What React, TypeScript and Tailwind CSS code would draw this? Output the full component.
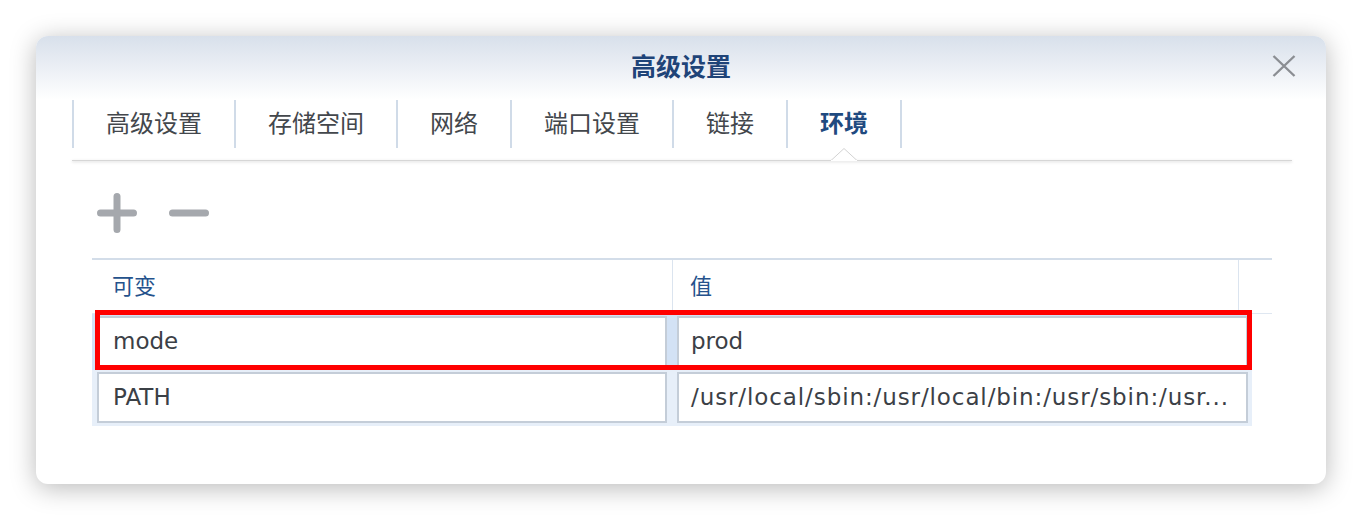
import React from "react";

const tabs = ["高级设置", "存储空间", "网络", "端口设置", "链接", "环境"];

const rows = [
  { name: "mode", value: "prod", selected: true },
  { name: "PATH", value: "/usr/local/sbin:/usr/local/bin:/usr/sbin:/usr...", selected: false },
];

const App: React.FC = () => {
  return (
    <div
      className="h-[520px] w-full bg-white pl-[36px] pt-[36px]"
      style={{ fontFamily: '"DejaVu Sans", "Noto Sans CJK SC", sans-serif' }}
    >
      {/* Dialog */}
      <div className="relative h-[448px] w-[1290px] overflow-hidden rounded-[12px] bg-white shadow-[0_4px_26px_rgba(0,0,0,0.28)]">
        {/* Header */}
        <div className="relative flex h-[64px] items-center justify-center bg-gradient-to-b from-[#d8e0eb] to-white">
          <h1 className="text-[25px] font-bold text-[#1f4478]">高级设置</h1>
          <button className="absolute right-[30px] top-[19px] h-[22px] w-[24px]">
            <svg viewBox="0 0 24 22" className="h-[22px] w-[24px]">
              <path d="M1.5 1 L22.5 21 M22.5 1 L1.5 21" stroke="#8b8e93" strokeWidth="2.4" fill="none" />
            </svg>
          </button>
        </div>

        <div className="pl-[36px] pr-[34px]">
          {/* Tabs */}
          <div className="flex h-[48px]">
            {tabs.map((tab, i) => {
              const active = i === tabs.length - 1;
              return (
                <div
                  key={tab}
                  className={`relative flex items-center border-l-2 border-[#d0dbe8] px-[32px] text-[24px] ${
                    active ? "border-r-2 font-bold text-[#1f4a80]" : "text-[#43474c]"
                  }`}
                >
                  {tab}
                  {active && (
                    <svg
                      viewBox="0 0 26 13"
                      className="absolute -bottom-[13px] left-1/2 z-10 h-[13px] w-[26px] -translate-x-1/2"
                    >
                      <path d="M0 12.5 L13 0.5 L26 12.5" fill="white" stroke="#d2d2d2" strokeWidth="1" />
                      <rect x="0" y="12" width="26" height="1" fill="white" />
                    </svg>
                  )}
                </div>
              );
            })}
          </div>
          <div className="mt-[12px] h-px bg-[#d6d6d6] shadow-[0_1px_3px_rgba(0,0,0,0.22)]" />

          {/* Toolbar + table */}
          <div className="px-[20px]">
            <div className="mt-[32px] flex items-center gap-[32px] pl-[5px]">
              <svg viewBox="0 0 40 40" className="h-[40px] w-[40px]">
                <path d="M20 3.5 V36.5 M3.5 20 H36.5" stroke="#a5a8ad" strokeWidth="7" strokeLinecap="round" fill="none" />
              </svg>
              <svg viewBox="0 0 40 40" className="h-[40px] w-[40px]">
                <path d="M3.5 20 H36.5" stroke="#a5a8ad" strokeWidth="7" strokeLinecap="round" fill="none" />
              </svg>
            </div>

            <div className="mt-[25px] border-t-2 border-[#d3dde9]">
              {/* Header */}
              <div className="grid h-[54px] grid-cols-[581px_566px_1fr] border-b border-[#dfe7f1] text-[22px] text-[#25528c]">
                <div className="flex items-center border-r border-[#dbe4ef] pl-[20px]">可变</div>
                <div className="flex items-center border-r border-[#dbe4ef] pl-[17px]">值</div>
                <div />
              </div>

              {/* Rows */}
              {rows.map((row) => (
                <div
                  key={row.name}
                  className={`relative flex h-[56px] w-[1160px] gap-[10px] pb-[3px] pl-[5px] pr-[4px] pt-[2px] ${
                    row.selected ? "bg-[#d3e2f5]" : "bg-[#e7eff9]"
                  }`}
                >
                  <div className="flex w-[570px] items-center border-2 border-[#c4cdd8] bg-white px-[14px] text-[23px] text-[#3b4046]">
                    {row.name}
                  </div>
                  <div className="flex min-w-0 flex-1 items-center border-2 border-[#c4cdd8] bg-white pl-[12px] text-[23px] text-[#3b4046]">
                    <span className={row.selected ? "" : "tracking-[0.9px]"}>{row.value}</span>
                  </div>
                  {row.selected && (
                    <div className="pointer-events-none absolute -top-[4px] left-[3px] h-[60px] w-[1157px] border-[5px] border-[#ff0000]" />
                  )}
                </div>
              ))}
            </div>
          </div>
        </div>
      </div>
    </div>
  );
};

export default App;
